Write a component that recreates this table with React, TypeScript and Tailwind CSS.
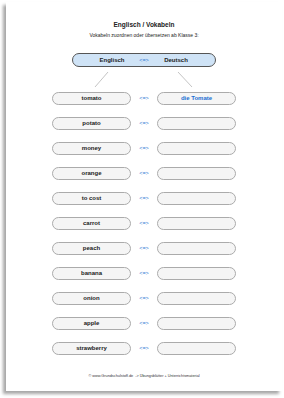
import React from "react";

const words = [
  "tomato",
  "potato",
  "money",
  "orange",
  "to cost",
  "carrot",
  "peach",
  "banana",
  "onion",
  "apple",
  "strawberry",
];

export default function App() {
  return (
    <div
      className="w-[284px] h-[398px] bg-white pl-[6px] pt-[2px] overflow-hidden"
      style={{ fontFamily: '"Liberation Sans", Arial, sans-serif' }}
    >
      <div className="w-[276px] h-[389px] bg-white shadow-[-3px_3px_3px_rgba(0,0,0,0.35)] flex flex-col items-center pt-[18px]">
        <div className="text-[6.5px] leading-[9px] font-bold text-[#222]">Englisch / Vokabeln</div>
        <div className="text-[5px] leading-[8px] mt-[2px] text-[#222]">
          Vokabeln zuordnen oder übersetzen ab Klasse 3:
        </div>
        <div className="mt-[14px] w-[144px] h-[14px] rounded-full border border-[#555] bg-[#cfe3f6] flex items-center justify-center">
          <span className="w-[50px] text-center text-[6px] font-bold text-[#222]">Englisch</span>
          <span className="w-[14px] text-center text-[5.5px] text-[#2f78d4]">&lt;=&gt;</span>
          <span className="w-[50px] text-center text-[6px] font-bold text-[#222]">Deutsch</span>
        </div>
        <svg width="276" height="25" viewBox="0 0 276 25" className="block">
          <line x1="102" y1="5" x2="89" y2="20" stroke="#b5b5b5" strokeWidth="0.8" />
          <line x1="172" y1="5" x2="186" y2="20" stroke="#b5b5b5" strokeWidth="0.8" />
        </svg>
        <div className="flex flex-col gap-[12px]">
          {words.map((w, i) => (
            <div key={w} className="flex items-center">
              <div className="w-[79px] h-[13px] rounded-full border border-[#ababab] bg-[#f5f5f5] flex items-center justify-center text-[6px] font-bold text-[#222]">
                {w}
              </div>
              <div className="w-[26px] text-center text-[5.5px] text-[#2f78d4]">&lt;=&gt;</div>
              <div className="w-[79px] h-[13px] rounded-full border border-[#ababab] bg-[#f5f5f5] flex items-center justify-center text-[6px] font-bold text-[#1a6fd3]">
                {i === 0 ? "die Tomate" : ""}
              </div>
            </div>
          ))}
        </div>
        <div className="mt-[19px] text-[3.8px] leading-[5px] text-[#333]">
          © www.Grundschulstoff.de &nbsp;-&gt; Übungsblätter + Unterrichtsmaterial
        </div>
      </div>
    </div>
  );
}
